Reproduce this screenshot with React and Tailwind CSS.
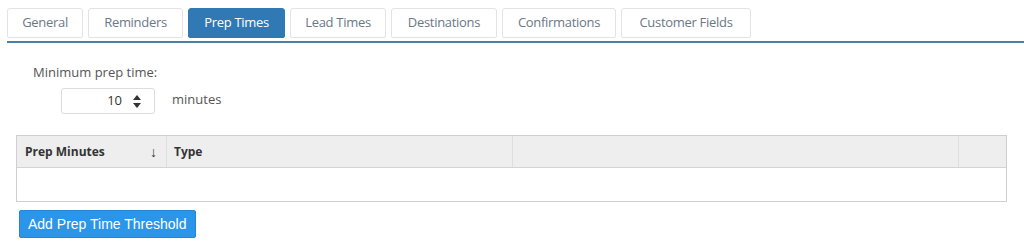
import { useState } from 'react';

const tabs = [
    { name: 'General', w: 'w-[76px]' },
    { name: 'Reminders', w: 'w-[95px]' },
    { name: 'Prep Times', w: 'w-[97px]' },
    { name: 'Lead Times', w: 'w-[96px]' },
    { name: 'Destinations', w: 'w-[106px]' },
    { name: 'Confirmations', w: 'w-[114px]' },
    { name: 'Customer Fields', w: 'w-[130px]' },
];

const App = () => {
    const [active, setActive] = useState('Prep Times');
    const [minutes, setMinutes] = useState(10);

    return (
        <div className="w-[1024px] h-[247px] bg-white overflow-hidden" style={{ fontFamily: '"Open Sans", "Noto Sans", sans-serif' }}>
            {/* Tabs */}
            <div className="pt-[8px] pl-[7px]">
                <div className="flex gap-[5px]">
                    {tabs.map((tab) => (
                        <button
                            key={tab.name}
                            onClick={() => setActive(tab.name)}
                            className={`${tab.w} h-[30px] rounded-t-[3px] rounded-b-[2px] text-[13px] tracking-[-0.3px] border ${active === tab.name ? 'bg-[#3179b5] border-[#3179b5] text-white' : 'bg-white border-[#e3e3e3] text-[#6a7886]'}`}
                        >
                            {tab.name}
                        </button>
                    ))}
                </div>
                <div className="mt-[3px] h-[2px] bg-[#4a7fa8]"></div>
            </div>

            {/* Minimum prep time */}
            <div className="pl-[33px] pt-[20px]">
                <div className="text-[13px] text-[#555] leading-[18px]">Minimum prep time:</div>
                <div className="flex items-center mt-[7px] ml-[28px]">
                    <div className="w-[94px] h-[26px] border border-[#dcdcdc] rounded-[3px] flex items-center justify-end pr-[13px]">
                        <span className="text-[13px] text-[#333] mr-[11px]">{minutes}</span>
                        <div className="flex flex-col gap-[3px]">
                            <button onClick={() => setMinutes(minutes + 1)} className="block">
                                <svg width="8" height="5" viewBox="0 0 8 5"><path d="M0 5 L4 0 L8 5 Z" fill="#333" /></svg>
                            </button>
                            <button onClick={() => setMinutes(Math.max(0, minutes - 1))} className="block">
                                <svg width="8" height="5" viewBox="0 0 8 5"><path d="M0 0 L4 5 L8 0 Z" fill="#333" /></svg>
                            </button>
                        </div>
                    </div>
                    <span className="ml-[17px] text-[13px] text-[#555] -mt-[3px]">minutes</span>
                </div>
            </div>

            {/* Table */}
            <div className="ml-[16px] mt-[21px] w-[991px] border border-[#cfcfcf]">
                <div className="flex h-[32px] bg-[#eeeeee] border-b border-[#d4d4d4] text-[12px] font-bold text-[#333]">
                    <div className="w-[150px] flex items-center justify-between pl-[8px] pr-[9px] border-r border-[#dedede]">
                        <span>Prep Minutes</span>
                        <span className="font-normal text-[14px]">↓</span>
                    </div>
                    <div className="w-[346px] flex items-center pl-[7px] border-r border-[#dedede]">Type</div>
                    <div className="w-[446px] border-r border-[#dedede]"></div>
                    <div className="flex-1"></div>
                </div>
                <div className="h-[33px] bg-white"></div>
            </div>

            {/* Button */}
            <button className="ml-[19px] mt-[8px] h-[28px] px-[8px] bg-[#2b95ea] border border-[#2486d6] rounded-[2px] text-white text-[14px]" style={{ fontFamily: '"Liberation Sans", Arial, sans-serif' }}>
                Add Prep Time Threshold
            </button>
        </div>
    );
};

export default App;
